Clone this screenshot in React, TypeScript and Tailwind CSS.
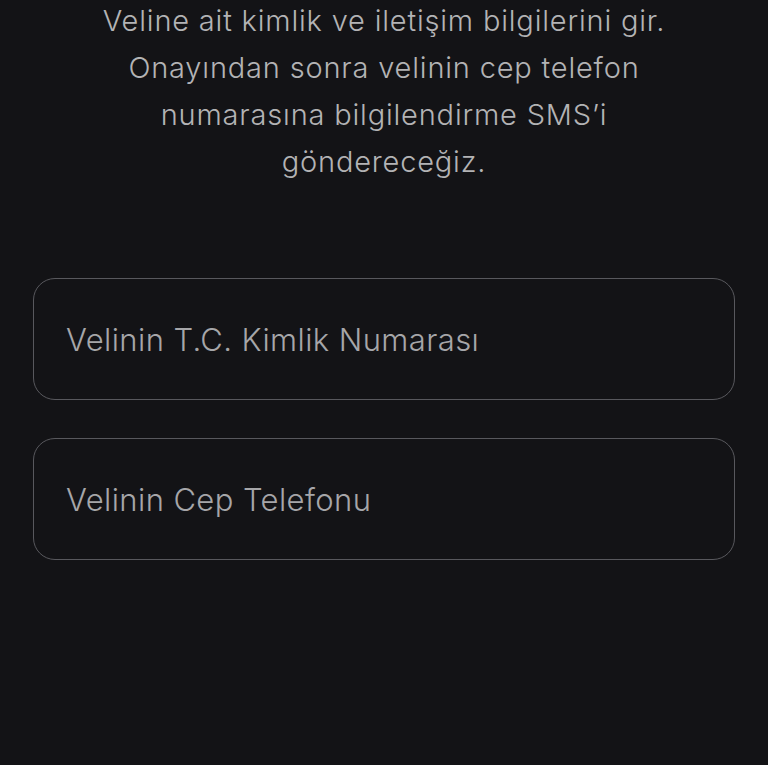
export default function App() {
  return (
    <div className="min-h-[768px] w-full bg-[#131316] px-[33px] font-['Inter','Liberation_Sans',sans-serif]">
      <p className="mx-auto -mt-[3px] text-center text-[29px] font-light leading-[47px] tracking-[0.028em] text-[#b3b3b5]">
        Veline ait kimlik ve iletişim bilgilerini gir.
        <br />
        Onayından sonra velinin cep telefon
        <br />
        numarasına bilgilendirme SMS’i
        <br />
        göndereceğiz.
      </p>
      <div className="mt-[93px] flex flex-col gap-[38px]">
        <input
          className="h-[122px] w-full rounded-[22px] border-[1.5px] border-[#58585d] bg-transparent px-[32px] text-[31px] font-light tracking-[0.013em] text-[#a6a6a9] placeholder:text-[#a6a6a9] outline-none"
          placeholder="Velinin T.C. Kimlik Numarası"
        />
        <input
          className="h-[122px] w-full rounded-[22px] border-[1.5px] border-[#58585d] bg-transparent px-[32px] text-[31px] font-light tracking-[0.013em] text-[#a6a6a9] placeholder:text-[#a6a6a9] outline-none"
          placeholder="Velinin Cep Telefonu"
        />
      </div>
    </div>
  );
}
